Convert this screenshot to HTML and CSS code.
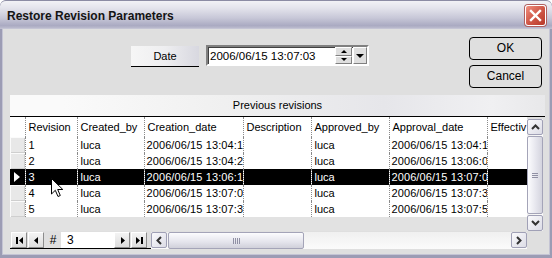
FILE: index.html
```html
<!DOCTYPE html>
<html lang="en">
<head>
    <meta charset="UTF-8">
    <title>Restore Revision Parameters</title>
    <link rel="stylesheet" href="styles.css">
</head>
<body>
    <div class="window">
        <div class="titlebar">
            <span class="title">Restore Revision Parameters</span>
            <div class="close">
                <svg width="13" height="13" viewBox="0 0 13 13">
                    <path d="M2 2 L11 11 M11 2 L2 11" stroke="#fff" stroke-width="2.4" stroke-linecap="square"/>
                </svg>
            </div>
        </div>
        <div class="client">
            <div class="top">
                <div class="date-group">
                    <div class="date-btn">Date</div>
                    <div class="date-input">
                        <span class="date-value">2006/06/15 13:07:03</span>
                        <div class="spin">
                            <div class="spin-btn"><span class="tri-up"></span></div>
                            <div class="spin-btn"><span class="tri-down"></span></div>
                        </div>
                        <div class="drop"><span class="tri-drop"></span></div>
                    </div>
                </div>
                <div class="actions">
                    <div class="btn">OK</div>
                    <div class="btn">Cancel</div>
                </div>
            </div>

            <div class="panel">
                <div class="panel-head">Previous revisions</div>
                <div class="grid-wrap">
                    <div class="grid">
                        <table>
                            <colgroup>
                                <col style="width:15px"><col style="width:52px"><col style="width:67px">
                                <col style="width:99px"><col style="width:68px"><col style="width:78px">
                                <col style="width:98px"><col style="width:40px">
                            </colgroup>
                            <tr class="head">
                                <td class="ind"></td><td>Revision</td><td>Created_by</td><td>Creation_date</td>
                                <td>Description</td><td>Approved_by</td><td>Approval_date</td><td>Effectiv</td>
                            </tr>
                            <tr>
                                <td class="ind"></td><td>1</td><td>luca</td><td class="dt">2006/06/15 13:04:1</td>
                                <td></td><td>luca</td><td class="dt">2006/06/15 13:04:1</td><td></td>
                            </tr>
                            <tr>
                                <td class="ind"></td><td>2</td><td>luca</td><td class="dt">2006/06/15 13:04:2</td>
                                <td></td><td>luca</td><td class="dt">2006/06/15 13:06:0</td><td></td>
                            </tr>
                            <tr class="sel">
                                <td class="ind"><span class="tri-sel"></span></td><td>3</td><td>luca</td><td class="dt">2006/06/15 13:06:1</td>
                                <td></td><td>luca</td><td class="dt">2006/06/15 13:07:0</td><td></td>
                            </tr>
                            <tr>
                                <td class="ind"></td><td>4</td><td>luca</td><td class="dt">2006/06/15 13:07:0</td>
                                <td></td><td>luca</td><td class="dt">2006/06/15 13:07:3</td><td></td>
                            </tr>
                            <tr>
                                <td class="ind"></td><td>5</td><td>luca</td><td class="dt">2006/06/15 13:07:3</td>
                                <td></td><td>luca</td><td class="dt">2006/06/15 13:07:5</td><td></td>
                            </tr>
                        </table>
                    </div>
                    <div class="vscroll">
                        <div class="sb-btn">
                            <svg width="9" height="6" viewBox="0 0 9 6"><path d="M1 5 L4.5 1.5 L8 5" fill="none" stroke="#333" stroke-width="2"/></svg>
                        </div>
                        <div class="vtrack">
                            <div class="vthumb"><span class="grip-h"></span></div>
                        </div>
                        <div class="sb-btn">
                            <svg width="9" height="6" viewBox="0 0 9 6"><path d="M1 1 L4.5 4.5 L8 1" fill="none" stroke="#333" stroke-width="2"/></svg>
                        </div>
                    </div>
                </div>
                <div class="footer">
                    <div class="nav">
                        <div class="nav-btn">
                            <svg width="9" height="9" viewBox="0 0 9 9"><path d="M1 1 H3 V8 H1 Z M8 1 V8 L4 4.5 Z" fill="#000"/></svg>
                        </div>
                        <div class="nav-btn">
                            <svg width="9" height="9" viewBox="0 0 9 9"><path d="M6 1 V8 L2 4.5 Z" fill="#000"/></svg>
                        </div>
                        <span class="hash">#</span>
                        <div class="rec">3</div>
                        <div class="nav-btn">
                            <svg width="9" height="9" viewBox="0 0 9 9"><path d="M3 1 V8 L7 4.5 Z" fill="#000"/></svg>
                        </div>
                        <div class="nav-btn">
                            <svg width="9" height="9" viewBox="0 0 9 9"><path d="M1 1 V8 L5 4.5 Z M6 1 H8 V8 H6 Z" fill="#000"/></svg>
                        </div>
                    </div>
                    <div class="hscroll">
                        <div class="sb-btn">
                            <svg width="6" height="9" viewBox="0 0 6 9"><path d="M5 1 L1.5 4.5 L5 8" fill="none" stroke="#333" stroke-width="2"/></svg>
                        </div>
                        <div class="htrack">
                            <div class="hthumb"><span class="grip-v"></span></div>
                        </div>
                        <div class="sb-btn">
                            <svg width="6" height="9" viewBox="0 0 6 9"><path d="M1 1 L4.5 4.5 L1 8" fill="none" stroke="#333" stroke-width="2"/></svg>
                        </div>
                    </div>
                </div>
            </div>
        </div>
        <svg class="cursor" width="13" height="20" viewBox="0 0 13 20">
            <path d="M0.5 0.5 V16 L4.3 12.3 L7 18.5 L9.3 17.5 L6.7 11.5 H11.8 Z" fill="#fff" stroke="#000" stroke-width="1"/>
        </svg>
    </div>
</body>
</html>
```

FILE: styles.css
```css
body {
    margin: 0;
    font-family: "Liberation Sans", Arial, sans-serif;
    font-size: 11px;
    color: #000;
}
.window {
    position: relative;
    width: 552px;
    height: 258px;
    background: #9c9cb4;
    border-radius: 6px 6px 0 0;
    overflow: hidden;
}
.titlebar {
    height: 29px;
    display: flex;
    align-items: center;
    justify-content: space-between;
    padding: 0 6px 0 7px;
    box-sizing: border-box;
    background: linear-gradient(#f2f2f6 0%, #e4e4ec 25%, #c8c8d8 60%, #aaaac2 88%, #c2c2d2 100%);
    border-top: 1px solid #8c8ca4;
    border-radius: 6px 6px 0 0;
}
.title {
    font-weight: bold;
    font-size: 12px;
    color: #141414;
    margin-top: 1px;
}
.close {
    width: 19px;
    height: 19px;
    border: 1px solid #fff;
    border-radius: 3px;
    background: linear-gradient(135deg, #f09080, #d05848 50%, #b83828);
    display: flex;
    align-items: center;
    justify-content: center;
    box-shadow: 0 0 0 1px #b06060;
}
.client {
    height: 225px;
    margin: 0 3px;
    background: #dfdfdf;
    box-shadow: 0 0 0 1px #c4c4d4;
    display: flex;
    flex-direction: column;
}
.top {
    display: flex;
    height: 66px;
}
.date-group {
    display: flex;
    align-items: flex-start;
    margin: 16px 0 0 128px;
    gap: 7px;
}
.date-btn {
    width: 68px;
    height: 20px;
    margin-top: 1px;
    line-height: 21px;
    text-align: center;
    background: linear-gradient(to right, #f6f6f6, #eeeef0 50%, #d8d8e0);
    border-bottom: 1px solid #000;
}
.date-input {
    width: 159px;
    height: 17px;
    background: #fff;
    border: 2px solid;
    border-color: #808080 #fff #fff #808080;
    box-shadow: inset 1px 1px #404040;
    display: flex;
    align-items: center;
}
.date-value {
    flex: 1;
    padding-left: 2px;
    font-size: 11.5px;
}
.spin {
    display: flex;
    flex-direction: column;
    width: 17px;
    height: 17px;
}
.spin-btn {
    flex: 1;
    background: #dfdfdf;
    border: 1px solid;
    border-color: #fff #808080 #808080 #fff;
    display: flex;
    align-items: center;
    justify-content: center;
}
.tri-up, .tri-down, .tri-drop {
    width: 0;
    height: 0;
    border-left: 3px solid transparent;
    border-right: 3px solid transparent;
}
.tri-up { border-bottom: 3px solid #000; }
.tri-down { border-top: 3px solid #000; }
.drop {
    width: 12px;
    height: 15px;
    margin-left: 1px;
    background: #dfdfdf;
    border: 1px solid;
    border-color: #fff #808080 #808080 #fff;
    display: flex;
    align-items: center;
    justify-content: center;
}
.tri-drop {
    border-left-width: 4px;
    border-right-width: 4px;
    border-top: 4px solid #000;
}
.actions {
    margin: 8px 7px 0 auto;
    display: flex;
    flex-direction: column;
    gap: 5px;
}
.btn {
    width: 71px;
    height: 21px;
    border: 1px solid #000;
    border-radius: 4px;
    line-height: 21px;
    text-align: center;
    font-size: 12px;
}
.panel {
    margin: 0 4px 0 7px;
    display: flex;
    flex-direction: column;
}
.panel-head {
    height: 21px;
    line-height: 21px;
    text-align: center;
    border-bottom: 1px solid #000;
    background: linear-gradient(to right, #fafafa 10%, #f0f0f0 40%, #e6e6ea 70%, #f0f0f2 90%, #e8e8ea);
}
.grid-wrap {
    display: flex;
    height: 114px;
}
.grid {
    width: 517px;
    background: #e2e2e2;
    overflow: hidden;
}
table {
    table-layout: fixed;
    border-collapse: collapse;
    width: 517px;
    background: #fff;
}
td {
    height: 16px;
    padding: 0 0 0 3px;
    white-space: nowrap;
    overflow: hidden;
    border-left: 1px dotted #8a8a8a;
    font-size: 11px;
}
td.dt {
    padding-left: 2px;
    letter-spacing: 0.1px;
}
td.ind {
    padding: 0;
    border-left: 0;
    background: #e8e8e8;
    box-shadow: inset 1px 1px #fbfbfb, inset -1px -1px #cfcfcf;
}
tr.head td {
    height: 20px;
}
tr.head td.ind {
    background: #fff;
    box-shadow: none;
}
tr.sel td {
    background: #000;
    color: #fff;
}
tr.sel td.ind {
    box-shadow: none;
}
.tri-sel {
    display: block;
    width: 0;
    height: 0;
    margin-left: 4px;
    border-top: 5px solid transparent;
    border-bottom: 5px solid transparent;
    border-left: 6px solid #fff;
}
.vscroll {
    width: 16px;
    margin-top: 2px;
    display: flex;
    flex-direction: column;
    background: linear-gradient(to right, #f0f0f0, #fbfbfb);
}
.sb-btn {
    width: 14px;
    height: 14px;
    flex: none;
    border: 1px solid #a0a0b6;
    border-radius: 2px;
    background: linear-gradient(135deg, #fafafc, #dcdce6);
    display: flex;
    align-items: center;
    justify-content: center;
}
.vtrack {
    flex: 1;
    padding: 1px 0;
    display: flex;
}
.vthumb {
    flex: 1;
    border: 1px solid #a4a4b8;
    border-radius: 2px;
    background: linear-gradient(to right, #fcfcfe, #e4e4ec 60%, #d4d4de);
    display: flex;
    align-items: center;
    justify-content: center;
}
.grip-h {
    width: 6px;
    height: 5px;
    background: repeating-linear-gradient(#9090a4 0 1px, transparent 1px 2px);
}
.footer {
    display: flex;
    height: 17px;
    margin-top: 1px;
}
.nav {
    width: 141px;
    display: flex;
    align-items: center;
    border-bottom: 1px solid #000;
    box-sizing: border-box;
    padding-left: 1px;
}
.nav-btn {
    width: 14px;
    height: 14px;
    margin-right: 1px;
    border: 1px solid;
    border-color: #fff #8c8c8c #8c8c8c #fff;
    background: linear-gradient(#f4f4f4, #dcdcdc);
    display: flex;
    align-items: center;
    justify-content: center;
}
.hash {
    width: 16px;
    text-align: center;
    font-size: 12px;
}
.rec {
    width: 47px;
    height: 16px;
    line-height: 16px;
    background: #fff;
    padding-left: 6px;
    font-size: 12px;
}
.hscroll {
    width: 376px;
    display: flex;
    background: linear-gradient(#f0f0f0, #fbfbfb);
}
.htrack {
    flex: 1;
    padding: 0 1px;
    display: flex;
}
.hthumb {
    width: 134px;
    border: 1px solid #a4a4b8;
    border-radius: 2px;
    background: linear-gradient(#fcfcfe, #e4e4ec 60%, #d0d0da);
    display: flex;
    align-items: center;
    justify-content: center;
}
.grip-v {
    width: 7px;
    height: 6px;
    background: repeating-linear-gradient(to right, #9090a4 0 1px, transparent 1px 2px);
}
.cursor {
    position: absolute;
    left: 51px;
    top: 178px;
}
```
